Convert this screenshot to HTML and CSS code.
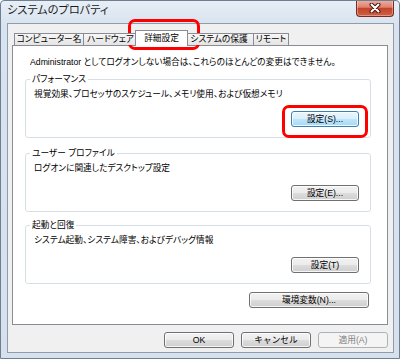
FILE: index.html
```html
<!DOCTYPE html>
<html lang="ja">
<head>
    <meta charset="utf-8">
    <title>システムのプロパティ</title>
    <link rel="stylesheet" href="styles.css">
</head>
<body>
    <div class="window">
        <div class="titlebar">
            <span class="title">システムのプロパティ</span>
            <button class="close-btn" title="閉じる">
                <svg width="14" height="10" viewBox="0 0 14 10">
                    <path d="M3.5 1.5 L10.5 8.5 M10.5 1.5 L3.5 8.5" stroke="#4a1710" stroke-width="4" stroke-linecap="round"/>
                    <path d="M3.5 1.5 L10.5 8.5 M10.5 1.5 L3.5 8.5" stroke="#ffffff" stroke-width="2" stroke-linecap="round"/>
                </svg>
            </button>
        </div>

        <div class="client">
            <div class="tabs">
                <div class="tab tab-computer">コンピューター名</div>
                <div class="tab tab-hardware">ハードウェア</div>
                <div class="tab tab-advanced selected">詳細設定</div>
                <div class="tab tab-protect">システムの保護</div>
                <div class="tab tab-remote">リモート</div>
            </div>

            <div class="panel">
                <p class="notice">Administrator としてログオンしない場合は、これらのほとんどの変更はできません。</p>

                <fieldset class="group group-perf">
                    <legend>パフォーマンス</legend>
                    <p class="desc">視覚効果、プロセッサのスケジュール、メモリ使用、および仮想メモリ</p>
                    <div class="group-actions">
                        <button class="btn btn-small hot">設定(S)...</button>
                    </div>
                </fieldset>

                <fieldset class="group group-profile">
                    <legend>ユーザー プロファイル</legend>
                    <p class="desc">ログオンに関連したデスクトップ設定</p>
                    <div class="group-actions">
                        <button class="btn btn-small">設定(E)...</button>
                    </div>
                </fieldset>

                <fieldset class="group group-startup">
                    <legend>起動と回復</legend>
                    <p class="desc">システム起動、システム障害、およびデバッグ情報</p>
                    <div class="group-actions">
                        <button class="btn btn-small">設定(T)</button>
                    </div>
                </fieldset>

                <div class="env-row">
                    <button class="btn btn-wide">環境変数(N)...</button>
                </div>
            </div>

            <div class="dialog-buttons">
                <button class="btn">OK</button>
                <button class="btn">キャンセル</button>
                <button class="btn" disabled>適用(A)</button>
            </div>
        </div>

        <!-- red marks drawn over the screenshot -->
        <div class="mark mark-tab"></div>
        <div class="mark mark-button"></div>
    </div>
</body>
</html>
```

FILE: styles.css
```css
body {
    margin: 0;
    font-family: "Liberation Sans", "Noto Sans CJK JP", sans-serif;
    font-size: 8.7px;
    color: #000;
    font-feature-settings: "palt";
}
.window {
    position: relative;
    width: 400px;
    height: 359px;
    box-sizing: border-box;
    display: flex;
    flex-direction: column;
    padding: 0 5px 5px 6px;
    border: 1px solid #6f7f91;
    border-radius: 4px 4px 0 0;
    background: linear-gradient(#e7eef6, #d8e3ef 24px, #d6e1ed);
    overflow: hidden;
}
.titlebar {
    display: flex;
    align-items: flex-start;
    height: 22px;
}
.title {
    font-size: 11.2px;
    line-height: 18px;
    color: #1b1b1b;
}
.close-btn {
    margin: -1px 0 0 auto;
    width: 38px;
    height: 17px;
    padding: 0;
    display: flex;
    align-items: center;
    justify-content: center;
    border: 1px solid #7a2a1f;
    border-top: none;
    border-radius: 0 0 4px 4px;
    background: linear-gradient(#eeb0a2 0%, #de8370 45%, #c5432b 52%, #cf6044 100%);
    box-shadow: inset 0 0 0 1px rgba(255, 255, 255, 0.35);
}
.client {
    flex: 1;
    display: flex;
    flex-direction: column;
    padding: 6px 5px 0 4px;
    border: 1px solid #8e9cae;
    background: #f0f0f0;
}

/* tabs */
.tabs {
    position: relative;
    z-index: 1;
    display: flex;
    align-items: flex-end;
    height: 15px;
    padding-left: 2px;
}
.tab {
    box-sizing: border-box;
    height: 12px;
    line-height: 11px;
    margin-left: -1px;
    text-align: center;
    white-space: nowrap;
    border: 1px solid #898c95;
    border-bottom: none;
    background: linear-gradient(#f7f7f7, #e4e4e4);
}
.tab-computer { width: 70px; margin-left: 0; }
.tab-hardware { width: 55px; }
.tab-advanced { width: 53px; }
.tab-protect { width: 70px; }
.tab-remote { width: 36px; }
.tab.selected {
    position: relative;
    z-index: 2;
    height: 16px;
    line-height: 14px;
    margin: 0 -3px -1px -3px;
    background: #fff;
}

.panel {
    height: 280px;
    box-sizing: border-box;
    border: 1px solid #898c95;
    background: #fff;
}
.notice {
    margin: 10px 0 0 17px;
    line-height: 12px;
    white-space: nowrap;
}
.group {
    width: 346px;
    box-sizing: border-box;
    margin: 5px 0 0 12px;
    padding: 3px 11px 10px 8px;
    border: 1px solid #d5dfe5;
    border-radius: 3px;
    min-inline-size: 0;
}
.group-profile { margin-top: 9px; }
.group-startup { margin-top: 7px; }
.group legend {
    padding: 0 2px;
    margin-left: -4px;
    line-height: 12px;
}
.desc {
    margin: 0;
    line-height: 12px;
    white-space: nowrap;
}
.group-actions {
    display: flex;
    justify-content: flex-end;
    margin-top: 11px;
}
.env-row {
    display: flex;
    justify-content: flex-end;
    margin-top: 8px;
    padding-right: 18px;
}

/* buttons */
.btn {
    box-sizing: border-box;
    width: 70px;
    height: 16px;
    padding: 0;
    font-family: inherit;
    font-size: 8.7px;
    line-height: 14px;
    color: #000;
    border: 1px solid #707070;
    border-radius: 3px;
    background: linear-gradient(#f2f2f2 0%, #ebebeb 50%, #dddddd 50%, #cfcfcf 100%);
    box-shadow: inset 0 0 0 1px rgba(255, 255, 255, 0.8);
}
.btn-small { width: 68px; }
.btn-wide { width: 120px; }
.btn.hot {
    border-color: #3c7fb1;
    background: linear-gradient(#eaf6fd 0%, #d9f0fc 50%, #bee6fd 50%, #a7d9f5 100%);
}
.btn:disabled {
    color: #838383;
    border-color: #adb2b5;
    background: #f4f4f4;
    box-shadow: none;
}
.dialog-buttons {
    display: flex;
    justify-content: flex-end;
    gap: 7px;
    margin-top: 7px;
}

.mark {
    position: absolute;
    box-sizing: border-box;
    border: 3px solid #ff0000;
    border-radius: 7px;
}
.mark-tab {
    left: 127px;
    top: 18px;
    width: 72px;
    height: 31px;
}
.mark-button {
    left: 281px;
    top: 104px;
    width: 86px;
    height: 33px;
}
```
